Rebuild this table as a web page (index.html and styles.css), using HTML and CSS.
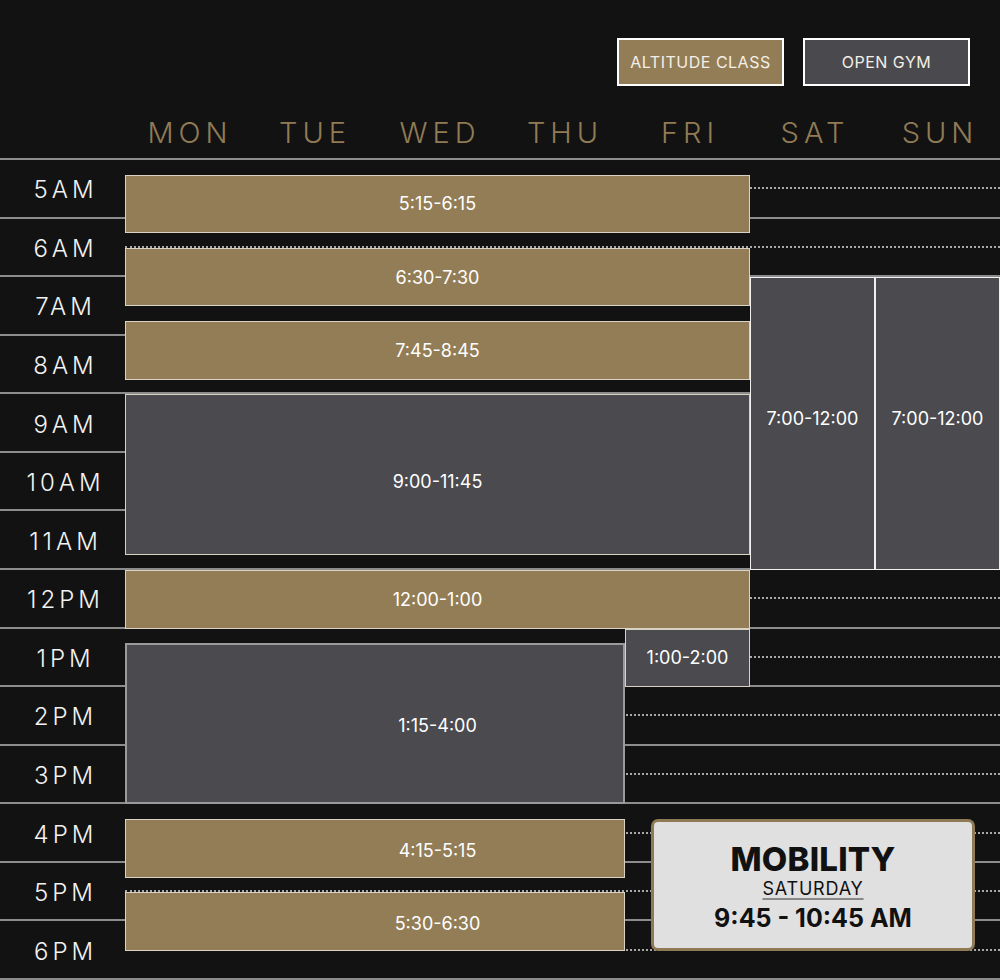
FILE: index.html
```html
<!DOCTYPE html>
<html lang="en">
<head>
<meta charset="utf-8">
<title>Schedule</title>
<link rel="stylesheet" href="styles.css">
</head>
<body>
<div class="page">
  <div class="legend">
    <div class="tag tag-gold">ALTITUDE CLASS</div>
    <div class="tag tag-gray">OPEN GYM</div>
  </div>
  <div class="days">
    <div class="day-spacer"></div>
    <div class="day">MON</div>
    <div class="day">TUE</div>
    <div class="day">WED</div>
    <div class="day">THU</div>
    <div class="day">FRI</div>
    <div class="day">SAT</div>
    <div class="day">SUN</div>
  </div>
  <div class="schedule">
    <div class="hour" style="grid-row: 1 / 5"><span class="label">5AM</span><span class="dots"></span></div>
    <div class="hour" style="grid-row: 5 / 9"><span class="label">6AM</span><span class="dots"></span></div>
    <div class="hour" style="grid-row: 9 / 13"><span class="label">7AM</span><span class="dots"></span></div>
    <div class="hour" style="grid-row: 13 / 17"><span class="label">8AM</span><span class="dots"></span></div>
    <div class="hour" style="grid-row: 17 / 21"><span class="label">9AM</span><span class="dots"></span></div>
    <div class="hour" style="grid-row: 21 / 25"><span class="label">10AM</span><span class="dots"></span></div>
    <div class="hour" style="grid-row: 25 / 29"><span class="label">11AM</span><span class="dots"></span></div>
    <div class="hour" style="grid-row: 29 / 33"><span class="label">12PM</span><span class="dots"></span></div>
    <div class="hour" style="grid-row: 33 / 37"><span class="label">1PM</span><span class="dots"></span></div>
    <div class="hour" style="grid-row: 37 / 41"><span class="label">2PM</span><span class="dots"></span></div>
    <div class="hour" style="grid-row: 41 / 45"><span class="label">3PM</span><span class="dots"></span></div>
    <div class="hour" style="grid-row: 45 / 49"><span class="label">4PM</span><span class="dots"></span></div>
    <div class="hour" style="grid-row: 49 / 53"><span class="label">5PM</span><span class="dots"></span></div>
    <div class="hour" style="grid-row: 53 / 57"><span class="label">6PM</span><span class="dots"></span></div>

    <div class="block gold" style="grid-row: 2 / 6; grid-column: 2 / 7">5:15-6:15</div>
    <div class="block gold" style="grid-row: 7 / 11; grid-column: 2 / 7">6:30-7:30</div>
    <div class="block gold" style="grid-row: 12 / 16; grid-column: 2 / 7">7:45-8:45</div>
    <div class="block gray low" style="grid-row: 17 / 28; grid-column: 2 / 7">9:00-11:45</div>
    <div class="block gray white high" style="grid-row: 9 / 29; grid-column: 7 / 8">7:00-12:00</div>
    <div class="block gray white high" style="grid-row: 9 / 29; grid-column: 8 / 9">7:00-12:00</div>
    <div class="block gold" style="grid-row: 29 / 33; grid-column: 2 / 7">12:00-1:00</div>
    <div class="block gray" style="grid-row: 33 / 37; grid-column: 6 / 7">1:00-2:00</div>
    <div class="block gray dim shift" style="grid-row: 34 / 45; grid-column: 2 / 6">1:15-4:00</div>
    <div class="block gold shift" style="grid-row: 46 / 50; grid-column: 2 / 6">4:15-5:15</div>
    <div class="block gold shift" style="grid-row: 51 / 55; grid-column: 2 / 6">5:30-6:30</div>

    <div class="mobility" style="grid-row: 46 / 55; grid-column: 6 / 9">
      <div class="mob-title">MOBILITY</div>
      <div class="mob-day">SATURDAY</div>
      <div class="mob-time">9:45 - 10:45 AM</div>
    </div>
  </div>
</div>
</body>
</html>
```

FILE: styles.css
```css
* { box-sizing: border-box; }

html, body {
  margin: 0;
  padding: 0;
  background: #121212;
}

body {
  font-family: "Inter", "Lato", sans-serif;
  color: #fff;
}

.page {
  width: 1000px;
  height: 980px;
  overflow: hidden;
  display: flex;
  flex-direction: column;
}

.legend {
  display: flex;
  justify-content: flex-end;
  gap: 19px;
  padding: 38px 30px 0 0;
  height: 86px;
}

.tag {
  width: 167px;
  height: 48px;
  border: 2px solid #fff;
  display: flex;
  align-items: center;
  justify-content: center;
  font-size: 16px;
  letter-spacing: 0.5px;
  color: #f4efe6;
}

.tag-gold { background: #937d56; }
.tag-gray { background: #4a4a4e; }

.days {
  display: grid;
  grid-template-columns: 125px repeat(7, 125px);
  height: 74px;
  border-bottom: 2px solid #8c8c8c;
  align-items: center;
  padding-top: 20px;
}

.day {
  text-align: center;
  font-size: 29px;
  font-weight: 300;
  letter-spacing: 5px;
  color: #917b55;
  line-height: 1;
  padding-left: 5px;
}

.schedule {
  display: grid;
  grid-template-columns: 125px repeat(7, 125px);
  grid-template-rows: repeat(56, 1fr);
  height: 820px;
}

.hour {
  grid-column: 1 / -1;
  display: flex;
  align-items: center;
  border-bottom: 2px solid #8c8c8c;
}

.label {
  width: 125px;
  flex: none;
  text-align: center;
  padding-left: 6px;
  padding-top: 3px;
  font-size: 24px;
  font-weight: 300;
  letter-spacing: 4px;
  color: #f2f2f2;
}

.dots {
  flex: 1;
  height: 0;
  border-top: 2px dotted rgba(220, 220, 220, 0.75);
}

.block {
  display: flex;
  align-items: center;
  justify-content: center;
  font-size: 18px;
  color: #fff;
  border: 1px solid #d9d3c6;
}

.gold { background: #937d56; }
.gray { background: #4a4a4f; }
.white { border-color: #f0f0f0; }
.dim { border: 2px solid #9a9a9a; }
.shift { padding-left: 125px; padding-top: 4px; }
.low { padding-top: 14px; }
.high { padding-bottom: 10px; }

.mobility {
  margin: 0 25px 0 26px;
  background: #e0e0e0;
  border: 3px solid #8f7a55;
  border-radius: 7px;
  display: flex;
  flex-direction: column;
  align-items: center;
  justify-content: center;
  color: #111;
  padding-top: 4px;
}

.mob-title {
  font-size: 33px;
  font-weight: 800;
  line-height: 1.1;
  letter-spacing: 0.2px;
}

.mob-day {
  font-size: 18px;
  letter-spacing: 0.8px;
  text-decoration: underline;
  text-decoration-color: #888;
  text-decoration-thickness: 2px;
  text-underline-offset: 3px;
  line-height: 1.3;
  margin-top: 0;
}

.mob-time {
  font-size: 25px;
  font-weight: 700;
  line-height: 1.2;
  margin-top: 2px;
}
```
